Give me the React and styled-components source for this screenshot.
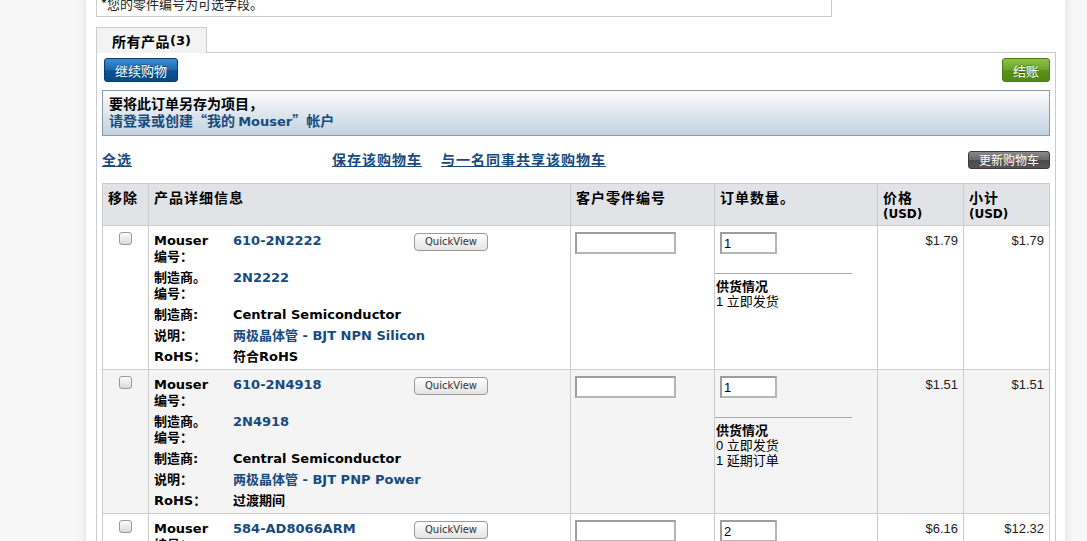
import styled, { createGlobalStyle } from 'styled-components';

const GlobalStyle = createGlobalStyle`
    html, body {
        margin: 0;
        padding: 0;
        background: #f7f7f7;
        overflow: hidden;
    }
    body {
        font-family: "DejaVu Sans", "Noto Sans CJK SC", sans-serif;
        font-size: 13px;
        color: #000;
    }
`;

const Page = styled.div`
    width: 979px;
    margin-left: 86px;
    margin-top: -8px;
    min-height: 600px;
    background: #fff;
    box-shadow: 0 0 10px rgba(0, 0, 0, 0.1);
    padding: 0 0 20px 10px;
    box-sizing: border-box;
`;

const NoteBox = styled.div`
    width: 736px;
    box-sizing: border-box;
    border: 1px solid #ccc;
    border-top: none;
    padding: 3px 4px 4px;
    line-height: 17px;
    font-family: "Noto Sans CJK SC", sans-serif;
    color: #222;
`;

const Tabs = styled.div`
    display: flex;
    margin-top: 10px;
    position: relative;
    z-index: 1;
    margin-bottom: -1px;
`;

const Tab = styled.div`
    height: 25px;
    padding: 0 15px;
    display: flex;
    align-items: center;
    background: #f3f3f3;
    border: 1px solid #ccc;
    border-bottom: none;
    font-weight: bold;
    font-size: 14px;
    font-family: "Noto Sans CJK SC", sans-serif;
    letter-spacing: 0.5px;
`;

const Count = styled.span`
    font-family: "DejaVu Sans", sans-serif;
    font-size: 13px;
    letter-spacing: 0;
`;

const Panel = styled.div`
    width: 960px;
    box-sizing: border-box;
    border: 1px solid #ccc;
    padding: 5px 5px 10px;
`;

const ButtonBar = styled.div`
    display: flex;
    justify-content: space-between;
    align-items: center;
    padding-left: 2px;
`;

const ActionButton = styled.button`
    height: 24px;
    padding: 0 10px;
    border-radius: 3px;
    color: #fff;
    font-family: "Noto Sans CJK SC", sans-serif;
    font-size: 13px;
    cursor: pointer;
    text-shadow: 0 -1px 0 rgba(0, 0, 0, 0.35);
    border: 1px solid ${p => p.$border};
    background: linear-gradient(to bottom, ${p => p.$from} 0%, ${p => p.$mid} 50%, ${p => p.$to} 51%, ${p => p.$end} 100%);
`;

const ProjectBox = styled.div`
    margin-top: 8px;
    border: 1px solid #8d99a6;
    background: linear-gradient(to bottom, #ffffff 0%, #eef1f5 25%, #c2d2e0 100%);
    padding: 4px 6px 5px;
    font-family: "Noto Sans CJK SC", sans-serif;
    font-size: 14px;
    font-weight: bold;
    line-height: 17px;
`;

const BlueText = styled.div`
    color: #174b7e;
`;

const Latin = styled.span`
    font-family: "DejaVu Sans", sans-serif;
    font-size: 13px;
`;

const LinkRow = styled.div`
    display: flex;
    align-items: center;
    margin-top: 15px;
    height: 18px;
`;

const TextLink = styled.a`
    color: #174b7e;
    font-weight: bold;
    font-size: 14px;
    line-height: 16px;
    margin-top: -2px;
    font-family: "Noto Sans CJK SC", sans-serif;
    text-decoration: underline;
    letter-spacing: 1px;
    cursor: pointer;
    width: ${p => p.$w || 'auto'};
    margin-right: ${p => p.$mr || '0'};
`;

const UpdateButton = styled.button`
    margin-left: auto;
    height: 18px;
    width: 82px;
    padding: 0;
    border: 1px solid #3a3a3a;
    border-radius: 3px;
    background: linear-gradient(to bottom, #8a8a8a 0%, #666 50%, #4a4a4a 51%, #555 100%);
    color: #fff;
    font-family: "Noto Sans CJK SC", sans-serif;
    font-size: 12px;
    line-height: 16px;
`;

const Table = styled.table`
    margin-top: 14px;
    width: 948px;
    border-collapse: collapse;
    table-layout: fixed;
    border: 1px solid #ccc;
`;

const Th = styled.th`
    width: ${p => p.$w}px;
    height: 42px;
    box-sizing: border-box;
    background: #e1e3e7;
    border: 1px solid #ccc;
    padding: 5px 5px 0;
    text-align: left;
    vertical-align: top;
    font-family: "Noto Sans CJK SC", sans-serif;
    font-size: 14px;
    font-weight: bold;
    letter-spacing: 1px;
    line-height: 17px;
`;

const Unit = styled.div`
    font-family: "DejaVu Sans", sans-serif;
    font-size: 12px;
    letter-spacing: 0;
`;

const Tr = styled.tr`
    background: ${p => (p.$alt ? '#f4f4f4' : '#fff')};
`;

const Td = styled.td`
    border: 1px solid #ccc;
    vertical-align: top;
    padding: ${p => p.$pad || '6px 5px'};
    text-align: ${p => p.$align || 'left'};
`;

const CheckBox = styled.input.attrs({ type: 'checkbox' })`
    appearance: none;
    display: block;
    margin: 0 auto;
    width: 13px;
    height: 13px;
    border: 1px solid #9a9a9a;
    border-radius: 3px;
    background: linear-gradient(to bottom, #fdfdfd, #d9d9d9);
`;

const Details = styled.div`
    display: flex;
    flex-direction: column;
    gap: 5px;
    line-height: 16px;
`;

const DetailRow = styled.div`
    display: flex;
    align-items: flex-start;
`;

const Label = styled.div`
    width: 72px;
    margin-right: 7px;
    font-weight: bold;
    font-family: "DejaVu Sans", "Noto Sans CJK SC", sans-serif;
`;

const Value = styled.div`
    width: ${p => p.$w || 'auto'};
    font-weight: bold;
    color: ${p => (p.$blue ? '#174b7e' : '#000')};
    font-family: "DejaVu Sans", "Noto Sans CJK SC", sans-serif;
`;

const QuickView = styled.button`
    width: 74px;
    height: 18px;
    padding: 0;
    border: 1px solid #999;
    border-radius: 4px;
    background: linear-gradient(to bottom, #ffffff, #e4e4e4);
    color: #333;
    font-family: "DejaVu Sans", sans-serif;
    font-size: 10px;
    line-height: 16px;
`;

const TextInput = styled.input`
    display: block;
    width: ${p => p.$w}px;
    height: 22px;
    box-sizing: border-box;
    margin-left: ${p => p.$ml || 0}px;
    border: 2px solid #9e9e9e;
    border-right-color: #b5b5b5;
    border-bottom-color: #b5b5b5;
    padding: 1px 2px 0;
    font-family: "Liberation Sans", sans-serif;
    font-size: 13px;
    color: #000;
    background: #fff;
`;

const Availability = styled.div`
    width: 136px;
    margin-top: 19px;
    border-top: 1px solid #aaa;
    padding: 5px 0 0 1px;
    font-family: "Liberation Sans", "Noto Sans CJK SC", sans-serif;
    font-size: 13px;
    line-height: 15px;
`;

const AvailTitle = styled.div`
    font-weight: bold;
`;

const Price = styled.div`
    font-family: "Liberation Sans", sans-serif;
    font-size: 13px;
    color: #222;
`;

const products = [
    {
        mouser: '610-2N2222',
        mfrNo: '2N2222',
        mfr: 'Central Semiconductor',
        descCn: '两极晶体管',
        desc: ' - BJT NPN Silicon',
        rohs: '符合RoHS',
        qty: '1',
        stock: ['1 立即发货'],
        price: '$1.79',
        total: '$1.79',
    },
    {
        mouser: '610-2N4918',
        mfrNo: '2N4918',
        mfr: 'Central Semiconductor',
        descCn: '两极晶体管',
        desc: ' - BJT PNP Power',
        rohs: '过渡期间',
        qty: '1',
        stock: ['0 立即发货', '1 延期订单'],
        price: '$1.51',
        total: '$1.51',
    },
    {
        mouser: '584-AD8066ARM',
        mfrNo: 'AD8066ARM',
        mfr: 'Analog Devices',
        descCn: '运算放大器',
        desc: ' - Op Amps Dual 145MHz',
        rohs: '符合RoHS',
        qty: '2',
        stock: ['2 立即发货'],
        price: '$6.16',
        total: '$12.32',
    },
];

const ProductRow = ({ p, alt }) => (
    <Tr $alt={alt}>
        <Td $pad="6px 5px">
            <CheckBox />
        </Td>
        <Td $pad="7px 5px 4px 5px">
            <Details>
                <DetailRow>
                    <Label>Mouser<br />编号：</Label>
                    <Value $blue $w="181px">{p.mouser}</Value>
                    <QuickView>QuickView</QuickView>
                </DetailRow>
                <DetailRow>
                    <Label>制造商。<br />编号：</Label>
                    <Value $blue>{p.mfrNo}</Value>
                </DetailRow>
                <DetailRow>
                    <Label>制造商:</Label>
                    <Value>{p.mfr}</Value>
                </DetailRow>
                <DetailRow>
                    <Label>说明：</Label>
                    <Value $blue>{p.descCn}{p.desc}</Value>
                </DetailRow>
                <DetailRow>
                    <Label>RoHS：</Label>
                    <Value>{p.rohs}</Value>
                </DetailRow>
            </Details>
        </Td>
        <Td $pad="6px 4px">
            <TextInput $w={101} defaultValue="" />
        </Td>
        <Td $pad="6px 0">
            <TextInput $w={57} $ml={5} defaultValue={p.qty} />
            <Availability>
                <AvailTitle>供货情况</AvailTitle>
                {p.stock.map(s => (
                    <div key={s}>{s}</div>
                ))}
            </Availability>
        </Td>
        <Td $align="right" $pad="7px 5px">
            <Price>{p.price}</Price>
        </Td>
        <Td $align="right" $pad="7px 5px">
            <Price>{p.total}</Price>
        </Td>
    </Tr>
);

export default function App() {
    return (
        <>
            <GlobalStyle />
            <Page>
                <NoteBox>*您的零件编号为可选字段。</NoteBox>
                <Tabs>
                    <Tab>
                        所有产品<Count>(3)</Count>
                    </Tab>
                </Tabs>
                <Panel>
                    <ButtonBar>
                        <ActionButton $border="#0a3a6a" $from="#3d8bd0" $mid="#1a68ad" $to="#0a5596" $end="#064a86">
                            继续购物
                        </ActionButton>
                        <ActionButton $border="#4b7d12" $from="#8cc24a" $mid="#6aa32a" $to="#5a9418" $end="#4f8712">
                            结账
                        </ActionButton>
                    </ButtonBar>
                    <ProjectBox>
                        <div>要将此订单另存为项目，</div>
                        <BlueText>
                            请登录或创建“我的 <Latin>Mouser</Latin>”帐户
                        </BlueText>
                    </ProjectBox>
                    <LinkRow>
                        <TextLink $w="230px">全选</TextLink>
                        <TextLink $mr="19px">保存该购物车</TextLink>
                        <TextLink>与一名同事共享该购物车</TextLink>
                        <UpdateButton>更新购物车</UpdateButton>
                    </LinkRow>
                    <Table>
                        <thead>
                            <tr>
                                <Th $w={46}>移除</Th>
                                <Th $w={422}>产品详细信息</Th>
                                <Th $w={144}>客户零件编号</Th>
                                <Th $w={163}>订单数量。</Th>
                                <Th $w={86}>
                                    价格<Unit>(USD)</Unit>
                                </Th>
                                <Th $w={86}>
                                    小计<Unit>(USD)</Unit>
                                </Th>
                            </tr>
                        </thead>
                        <tbody>
                            {products.map((p, i) => (
                                <ProductRow key={p.mouser} p={p} alt={i % 2 === 1} />
                            ))}
                        </tbody>
                    </Table>
                </Panel>
            </Page>
        </>
    );
}
